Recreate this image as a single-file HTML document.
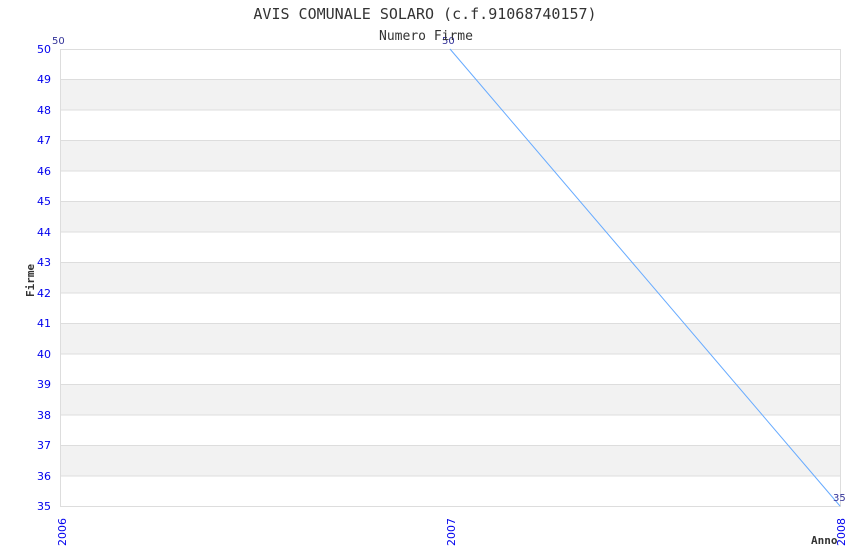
<!DOCTYPE html>
<html><head><style>body{margin:0;background:#fff}svg{display:block}</style></head>
<body>
<svg width="850" height="550" xmlns="http://www.w3.org/2000/svg">
<rect width="850" height="550" fill="#fff"/>
<g fill="#f2f2f2">
<rect x="60" y="79.5" width="780" height="30.5"/>
<rect x="60" y="140.4" width="780" height="30.5"/>
<rect x="60" y="201.3" width="780" height="30.5"/>
<rect x="60" y="262.3" width="780" height="30.5"/>
<rect x="60" y="323.2" width="780" height="30.5"/>
<rect x="60" y="384.1" width="780" height="30.5"/>
<rect x="60" y="445.1" width="780" height="30.5"/>
</g>
<g stroke="#dddddd" stroke-width="1">
<line x1="60" y1="49.5" x2="840" y2="49.5"/>
<line x1="60" y1="79.5" x2="840" y2="79.5"/>
<line x1="60" y1="110" x2="840" y2="110"/>
<line x1="60" y1="140.5" x2="840" y2="140.5"/>
<line x1="60" y1="171" x2="840" y2="171"/>
<line x1="60" y1="201.5" x2="840" y2="201.5"/>
<line x1="60" y1="232" x2="840" y2="232"/>
<line x1="60" y1="262.5" x2="840" y2="262.5"/>
<line x1="60" y1="293" x2="840" y2="293"/>
<line x1="60" y1="323.5" x2="840" y2="323.5"/>
<line x1="60" y1="354" x2="840" y2="354"/>
<line x1="60" y1="384.5" x2="840" y2="384.5"/>
<line x1="60" y1="415" x2="840" y2="415"/>
<line x1="60" y1="445.5" x2="840" y2="445.5"/>
<line x1="60" y1="476" x2="840" y2="476"/>
<line x1="60" y1="506.5" x2="840" y2="506.5"/>
<line x1="60.5" y1="49" x2="60.5" y2="507"/>
<line x1="840.5" y1="49" x2="840.5" y2="507"/>
</g>
<line x1="450" y1="49" x2="840" y2="506" stroke="#66aaff" stroke-width="1"/>
<g font-family="DejaVu Sans, sans-serif" font-size="11" fill="#0000ee" text-anchor="end">
<text x="51" y="53">50</text><text x="51" y="83">49</text><text x="51" y="114">48</text>
<text x="51" y="144">47</text><text x="51" y="175">46</text><text x="51" y="205">45</text>
<text x="51" y="236">44</text><text x="51" y="266">43</text><text x="51" y="297">42</text>
<text x="51" y="327">41</text><text x="51" y="358">40</text><text x="51" y="388">39</text>
<text x="51" y="419">38</text><text x="51" y="449">37</text><text x="51" y="480">36</text>
<text x="51" y="510">35</text>
</g>
<g font-family="DejaVu Sans, sans-serif" font-size="11" fill="#0000ee">
<text transform="translate(66,546) rotate(-90)">2006</text>
<text transform="translate(455,546) rotate(-90)">2007</text>
<text transform="translate(845,546) rotate(-90)">2008</text>
</g>
<g font-family="DejaVu Sans, sans-serif" font-size="10" fill="#333399">
<text x="52" y="44">50</text>
<text x="442" y="44">50</text>
<text x="833" y="501">35</text>
</g>
<g font-family="DejaVu Sans Mono, monospace" fill="#333">
<text x="425" y="19" font-size="15" text-anchor="middle">AVIS COMUNALE SOLARO (c.f.91068740157)</text>
<text x="426" y="40" font-size="13" text-anchor="middle">Numero Firme</text>
<text x="811" y="544" font-size="11" font-weight="bold">Anno</text>
<text transform="translate(34,297) rotate(-90)" font-size="11" font-weight="bold">Firme</text>
</g>
</svg>
</body></html>
